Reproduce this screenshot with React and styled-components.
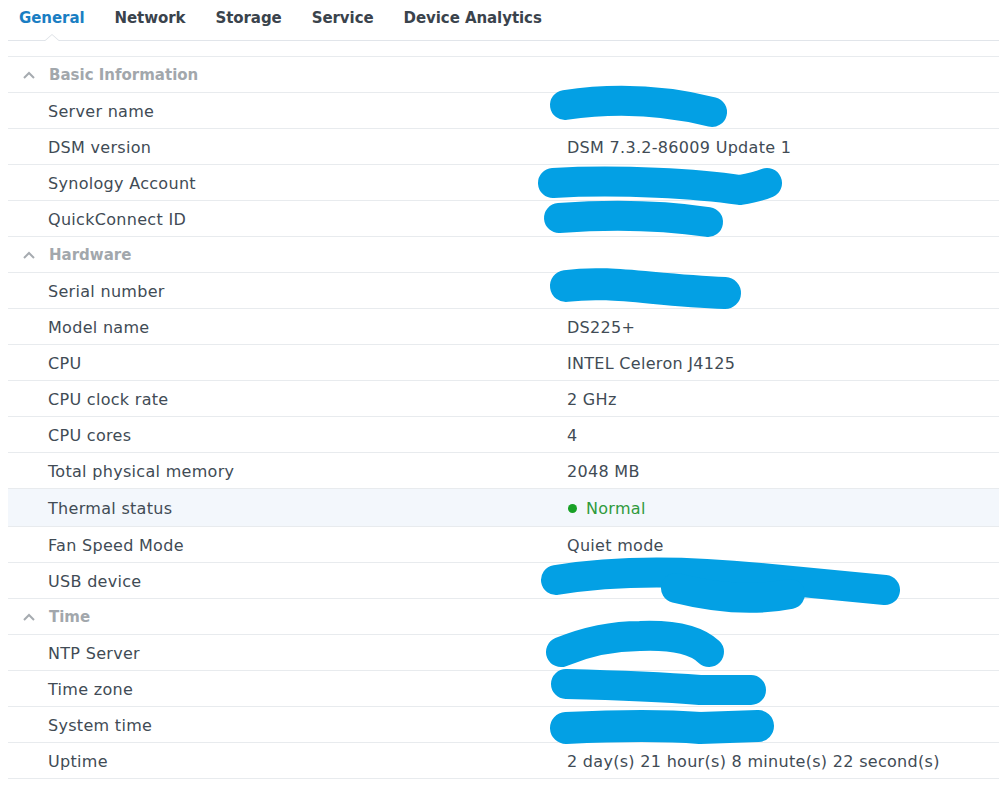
import React from "react";
import styled, { createGlobalStyle } from "styled-components";

const GlobalStyle = createGlobalStyle`
  html, body {
    margin: 0;
    padding: 0;
    background: #fff;
  }
  body {
    font-family: "DejaVu Sans", Verdana, sans-serif;
    color: #414b55;
  }
`;

const Page = styled.div`
  position: relative;
  width: 999px;
  height: 792px;
  padding-left: 8px;
  box-sizing: border-box;
  overflow: hidden;
`;

const TabBar = styled.div`
  display: flex;
  align-items: center;
  gap: 30px;
  height: 40px;
  padding-left: 11px;
  border-bottom: 1px solid #e1e5ea;
`;

const Tab = styled.div`
  position: relative;
  height: 40px;
  line-height: 36px;
  font-size: 15px;
  font-weight: bold;
  letter-spacing: -0.07px;
  color: ${(p) => (p.$active ? "#1a7ec3" : "#3a434c")};

  ${(p) =>
    p.$active &&
    `
    &::before, &::after {
      content: "";
      position: absolute;
      left: 50%;
      margin-left: -8px;
      width: 0;
      height: 0;
      border-left: 8px solid transparent;
      border-right: 8px solid transparent;
    }
    &::before {
      bottom: -1px;
      border-bottom: 7px solid #dde1e6;
    }
    &::after {
      bottom: -2px;
      border-bottom: 7px solid #fff;
    }
  `}
`;

const Table = styled.div`
  margin-top: 15px;
  border-top: 1px solid #e8ebee;
`;

const SectionHeader = styled.div`
  display: flex;
  align-items: center;
  height: 35px;
  border-bottom: 1px solid #e8ebee;
  font-size: 15px;
  font-weight: bold;
  color: #a2a7ac;

  svg {
    margin: 0 14px 0 15px;
  }
`;

const Row = styled.div`
  display: grid;
  grid-template-columns: 559px 1fr;
  align-items: center;
  height: ${(p) => (p.$hover ? "36px" : "34px")};
  padding-top: 1px;
  border-bottom: 1px solid #e8ebee;
  background: ${(p) => (p.$hover ? "#f3f7fc" : "transparent")};
  font-size: 16px;
  letter-spacing: 0.3px;
  color: #414b55;
`;

const Label = styled.div`
  padding-left: 40px;
`;

const Value = styled.div`
  display: flex;
  align-items: center;
  gap: 9px;
  color: ${(p) => (p.$status ? "#2f9a3c" : "#414b55")};
`;

const Dot = styled.span`
  width: 9px;
  height: 9px;
  border-radius: 50%;
  background: #18a126;
  margin-left: 1px;
`;

const Redactions = styled.svg`
  position: absolute;
  left: 0;
  top: 0;
  pointer-events: none;
`;

const Chevron = () => (
  <svg width="12" height="8" viewBox="0 0 12 8">
    <polyline
      points="1,7 6,2 11,7"
      fill="none"
      stroke="#a6abb0"
      strokeWidth="2"
    />
  </svg>
);

const sections = [
  {
    title: "Basic Information",
    rows: [
      ["Server name", ""],
      ["DSM version", "DSM 7.3.2-86009 Update 1"],
      ["Synology Account", ""],
      ["QuickConnect ID", ""],
    ],
  },
  {
    title: "Hardware",
    rows: [
      ["Serial number", ""],
      ["Model name", "DS225+"],
      ["CPU", "INTEL Celeron J4125"],
      ["CPU clock rate", "2 GHz"],
      ["CPU cores", "4"],
      ["Total physical memory", "2048 MB"],
      ["Thermal status", "Normal", "status"],
      ["Fan Speed Mode", "Quiet mode"],
      ["USB device", ""],
    ],
  },
  {
    title: "Time",
    rows: [
      ["NTP Server", ""],
      ["Time zone", ""],
      ["System time", ""],
      ["Uptime", "2 day(s) 21 hour(s) 8 minute(s) 22 second(s)"],
    ],
  },
];

const scribbles = [
  { d: "M565,105 Q640,94 712,112", w: 30 },
  { d: "M553,183 C620,179 700,184 740,190 Q758,187 767,183", w: 30 },
  { d: "M559,218 Q640,212 708,222", w: 30 },
  { d: "M566,286 C610,280 650,290 725,293", w: 32 },
  { d: "M556,580 Q640,566 760,578 L885,590", w: 30 },
  { d: "M676,588 Q740,604 790,594", w: 30 },
  { d: "M561,652 Q600,636 640,636 Q690,634 709,652", w: 30 },
  { d: "M566,684 Q650,686 700,690 L751,690", w: 30 },
  { d: "M566,728 Q650,724 700,728 L758,726", w: 32 },
];

export default function App() {
  const tabs = ["General", "Network", "Storage", "Service", "Device Analytics"];
  return (
    <>
      <GlobalStyle />
      <Page>
        <TabBar>
          {tabs.map((t, i) => (
            <Tab key={t} $active={i === 0}>
              {t}
            </Tab>
          ))}
        </TabBar>
        <Table>
          {sections.map((s) => (
            <React.Fragment key={s.title}>
              <SectionHeader>
                <Chevron />
                {s.title}
              </SectionHeader>
              {s.rows.map(([label, value, kind]) => (
                <Row key={label} $hover={kind === "status"}>
                  <Label>{label}</Label>
                  <Value $status={kind === "status"}>
                    {kind === "status" && <Dot />}
                    {value}
                  </Value>
                </Row>
              ))}
            </React.Fragment>
          ))}
        </Table>
        <Redactions width="999" height="792" viewBox="0 0 999 792">
          {scribbles.map((s, i) => (
            <path
              key={i}
              d={s.d}
              fill="none"
              stroke="#03a0e4"
              strokeWidth={s.w}
              strokeLinecap="round"
              strokeLinejoin="round"
            />
          ))}
        </Redactions>
      </Page>
    </>
  );
}
